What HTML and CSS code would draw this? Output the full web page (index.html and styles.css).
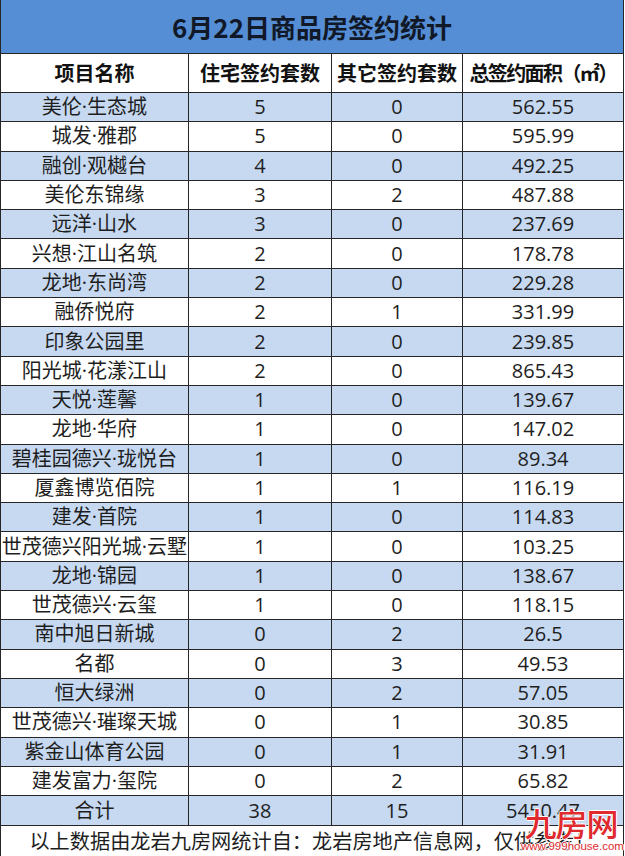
FILE: index.html
```html
<!DOCTYPE html>
<html lang="zh-CN">
<head>
<meta charset="utf-8">
<title>6月22日商品房签约统计</title>
<link rel="stylesheet" href="styles.css">
</head>
<body>
<div class="sheet">
<table class="stats">
  <colgroup>
    <col class="c1"><col class="c2"><col class="c3"><col class="c4">
  </colgroup>
  <tr class="title"><td colspan="4">6月22日商品房签约统计</td></tr>
  <tr class="head"><td>项目名称</td><td>住宅签约套数</td><td>其它签约套数</td><td class="area-head">总签约面积（㎡）</td></tr>
  <tr class="row alt"><td>美伦·生态城</td><td>5</td><td>0</td><td>562.55</td></tr>
  <tr class="row"><td>城发·雅郡</td><td>5</td><td>0</td><td>595.99</td></tr>
  <tr class="row alt"><td>融创·观樾台</td><td>4</td><td>0</td><td>492.25</td></tr>
  <tr class="row"><td>美伦东锦缘</td><td>3</td><td>2</td><td>487.88</td></tr>
  <tr class="row alt"><td>远洋·山水</td><td>3</td><td>0</td><td>237.69</td></tr>
  <tr class="row"><td>兴想·江山名筑</td><td>2</td><td>0</td><td>178.78</td></tr>
  <tr class="row alt"><td>龙地·东尚湾</td><td>2</td><td>0</td><td>229.28</td></tr>
  <tr class="row"><td>融侨悦府</td><td>2</td><td>1</td><td>331.99</td></tr>
  <tr class="row alt"><td>印象公园里</td><td>2</td><td>0</td><td>239.85</td></tr>
  <tr class="row"><td>阳光城·花漾江山</td><td>2</td><td>0</td><td>865.43</td></tr>
  <tr class="row alt"><td>天悦·莲馨</td><td>1</td><td>0</td><td>139.67</td></tr>
  <tr class="row"><td>龙地·华府</td><td>1</td><td>0</td><td>147.02</td></tr>
  <tr class="row alt"><td>碧桂园德兴·珑悦台</td><td>1</td><td>0</td><td>89.34</td></tr>
  <tr class="row"><td>厦鑫博览佰院</td><td>1</td><td>1</td><td>116.19</td></tr>
  <tr class="row alt"><td>建发·首院</td><td>1</td><td>0</td><td>114.83</td></tr>
  <tr class="row"><td>世茂德兴阳光城·云墅</td><td>1</td><td>0</td><td>103.25</td></tr>
  <tr class="row alt"><td>龙地·锦园</td><td>1</td><td>0</td><td>138.67</td></tr>
  <tr class="row"><td>世茂德兴·云玺</td><td>1</td><td>0</td><td>118.15</td></tr>
  <tr class="row alt"><td>南中旭日新城</td><td>0</td><td>2</td><td>26.5</td></tr>
  <tr class="row"><td>名都</td><td>0</td><td>3</td><td>49.53</td></tr>
  <tr class="row alt"><td>恒大绿洲</td><td>0</td><td>2</td><td>57.05</td></tr>
  <tr class="row"><td>世茂德兴·璀璨天城</td><td>0</td><td>1</td><td>30.85</td></tr>
  <tr class="row alt"><td>紫金山体育公园</td><td>0</td><td>1</td><td>31.91</td></tr>
  <tr class="row"><td>建发富力·玺院</td><td>0</td><td>2</td><td>65.82</td></tr>
  <tr class="row alt total"><td>合计</td><td>38</td><td>15</td><td>5450.47</td></tr>
  <tr class="foot"><td colspan="4">以上数据由龙岩九房网统计自：龙岩房地产信息网，仅供参考！</td></tr>
</table>
<div class="watermark">
  <div class="wm-name">九房网</div>
  <div class="wm-url">www.999house.com</div>
</div>
</div>
</body>
</html>
```

FILE: styles.css
```css
html, body {
  margin: 0;
  padding: 0;
  background: #ffffff;
}

.sheet {
  position: relative;
  width: 625px;
  height: 856px;
  overflow: hidden;
}

.stats {
  border-collapse: collapse;
  table-layout: fixed;
  width: 623px;
  font-family: "Open Sans", "Noto Sans CJK SC", sans-serif;
  color: #1e1e1e;
}

.c1 { width: 188px; }
.c2 { width: 143px; }
.c3 { width: 131px; }
.c4 { width: 161px; }

.stats td {
  border: 1px solid #262626;
  padding: 0;
  text-align: center;
  vertical-align: middle;
  white-space: nowrap;
  overflow: hidden;
  font-size: 20px;
  line-height: 1;
}

.title td {
  height: 53px;
  background: #558ed5;
  font-family: "Noto Sans CJK SC", sans-serif;
  font-weight: 700;
  font-size: 26px;
  color: #111827;
  border-top: none;
}

.head td {
  height: 38px;
  font-family: "Noto Sans CJK SC", sans-serif;
  font-weight: 700;
  font-size: 20px;
  color: #111111;
}

.head .area-head {
  letter-spacing: -1.6px;
}

.row td {
  height: 28.3px;
}

.row.alt td {
  background: #c6d9f1;
}

.total td {
  height: 29px;
}

.foot td {
  height: 30px;
  font-family: "Noto Sans CJK SC", sans-serif;
  font-size: 20.2px;
  border-bottom: none;
}

.watermark {
  position: absolute;
  left: 521px;
  top: 805px;
  width: 100px;
  text-align: center;
  color: #e02a2e;
  pointer-events: none;
}

.wm-name {
  font-family: "Noto Sans CJK SC", sans-serif;
  font-weight: 500;
  font-size: 32px;
  line-height: 35px;
  letter-spacing: -1px;
  text-shadow: 1px 0 0 #fff, -1px 0 0 #fff, 0 1px 0 #fff, 0 -1px 0 #fff;
}

.wm-url {
  font-family: "Liberation Sans", sans-serif;
  font-size: 11.5px;
  line-height: 13px;
  text-shadow: 1px 0 0 #fff, -1px 0 0 #fff, 0 1px 0 #fff, 0 -1px 0 #fff;
}
```
